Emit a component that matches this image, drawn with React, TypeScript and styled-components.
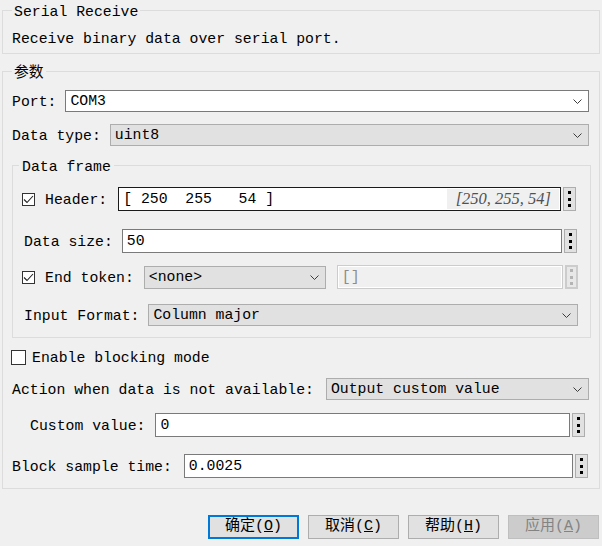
import React from 'react';
import styled, { createGlobalStyle } from 'styled-components';

const Global = createGlobalStyle`
  html, body { margin: 0; padding: 0; background: #f0f0f0; }
  body {
    width: 602px; height: 546px; overflow: hidden;
    font-family: "Liberation Mono", "Noto Sans CJK SC", monospace;
    font-size: 14.8px; color: #000;
  }
  * { box-sizing: border-box; }
`;

const Dialog = styled.div`
  display: flex;
  flex-direction: column;
  width: 602px;
  height: 546px;
  padding: 1px 2px 0 2px;
`;

const Group = styled.fieldset<{ $mt?: number; $mr?: number; $pt: number; $pb: number; $pr?: number }>`
  margin: ${p => p.$mt ?? 0}px ${p => p.$mr ?? 0}px 0 0;
  padding: ${p => p.$pt}px ${p => p.$pr ?? 10}px ${p => p.$pb}px 9px;
  border: 1px solid #dcdcdc;
  min-width: 0;
`;

const Legend = styled.legend<{ $inner?: boolean }>`
  padding: 2px ${p => (p.$inner ? 3 : 2)}px 0;
  margin-left: ${p => (p.$inner ? -3 : 0)}px;
  line-height: 18px;
  height: 18px;
  font-size: 14.8px;
`;

const Body = styled.div`
  display: flex;
  flex-direction: column;
`;

const Desc = styled.div`
  height: 18px;
  line-height: 18px;
  padding-top: 1px;
  white-space: pre;
`;

const Row = styled.div<{ $mt?: number; $h: number; $pr?: number; $pl?: number }>`
  display: flex;
  align-items: center;
  height: ${p => p.$h}px;
  margin-top: ${p => p.$mt ?? 0}px;
  padding-right: ${p => p.$pr ?? 0}px;
  padding-left: ${p => p.$pl ?? 0}px;
`;

const Label = styled.span<{ $gap?: number }>`
  flex: none;
  line-height: 18px;
  padding-top: 1px;
  white-space: pre;
  margin-right: ${p => p.$gap ?? 9}px;
`;

const Box = styled.span<{ $size: number; $ml?: number; $mr: number }>`
  flex: none;
  width: ${p => p.$size}px;
  height: ${p => p.$size}px;
  margin-left: ${p => p.$ml ?? 0}px;
  margin-right: ${p => p.$mr}px;
  border: 1px solid #333;
  background: #fff;
  display: flex;
  align-items: center;
  justify-content: center;
`;

const Combo = styled.div<{ $white?: boolean; $w?: number; $h?: number }>`
  flex: ${p => (p.$w ? `0 0 ${p.$w}px` : '1 1 0')};
  min-width: 0;
  height: ${p => p.$h ?? 22}px;
  display: flex;
  align-items: center;
  padding: 0 6px 0 4px;
  background: ${p => (p.$white ? '#ffffff' : '#e1e1e1')};
  border: 1px solid ${p => (p.$white ? '#7a7a7a' : '#adadad')};
`;

const Value = styled.span<{ $muted?: boolean }>`
  flex: 1;
  min-width: 0;
  overflow: hidden;
  white-space: pre;
  line-height: 18px;
  color: ${p => (p.$muted ? '#8c8c8c' : '#000')};
`;

const Edit = styled.div<{ $focus?: boolean; $disabled?: boolean; $h?: number; $ml?: number }>`
  flex: 1 1 0;
  min-width: 0;
  height: ${p => p.$h ?? 24}px;
  margin-left: ${p => p.$ml ?? 0}px;
  display: flex;
  align-items: center;
  padding-left: 4px;
  background: ${p => (p.$disabled ? '#f0f0f0' : '#ffffff')};
  border: 1px solid ${p => (p.$focus ? '#1a1a1a' : p.$disabled ? '#cccccc' : '#7a7a7a')};
  box-shadow: ${p => (p.$disabled ? 'inset 0 0 0 1px #ffffff' : 'none')};
`;

const Badge = styled.span`
  flex: none;
  height: 20px;
  margin-right: 1px;
  padding: 0 8px 0 9px;
  display: flex;
  align-items: center;
  background: #f0f0f0;
  color: #505050;
  font-family: "Liberation Serif", serif;
  font-style: italic;
  font-size: 16.5px;
  white-space: pre;
`;

const DotsButton = styled.div<{ $disabled?: boolean; $h?: number }>`
  flex: none;
  width: 13px;
  height: ${p => p.$h ?? 24}px;
  margin-left: 2px;
  display: flex;
  flex-direction: column;
  align-items: center;
  justify-content: center;
  gap: 3.5px;
  background: ${p => (p.$disabled ? '#e8e8e8' : '#e1e1e1')};
  border: ${p => (p.$disabled ? '2px solid #cccccc' : '1px solid #adadad')};
`;

const Dot = styled.span<{ $disabled?: boolean }>`
  width: 3px;
  height: 3px;
  background: ${p => (p.$disabled ? '#b4b4b4' : '#000')};
`;

const Buttons = styled.div`
  display: flex;
  justify-content: flex-end;
  gap: 9px;
  margin-top: 26px;
  padding-right: 1px;
`;

const Button = styled.div<{ $primary?: boolean; $disabled?: boolean }>`
  width: 91px;
  height: 24px;
  display: flex;
  align-items: center;
  justify-content: center;
  font-size: 15px;
  line-height: 18px;
  color: ${p => (p.$disabled ? '#838383' : '#000')};
  background: ${p => (p.$disabled ? '#cccccc' : '#e1e1e1')};
  border: ${p => (p.$primary ? '2px solid #0078d7' : p.$disabled ? '1px solid #bfbfbf' : '1px solid #adadad')};
  white-space: pre;
`;

const Chevron = () => (
  <svg width="9" height="5" viewBox="0 0 9 5" style={{ flex: 'none' }}>
    <polyline points="0.5,0.5 4.5,4.5 8.5,0.5" fill="none" stroke="#3c3c3c" strokeWidth="1" />
  </svg>
);

const Tick = () => (
  <svg width="11" height="9" viewBox="0 0 11 9">
    <polyline points="1,4.5 4,7.5 10,1" fill="none" stroke="#222" strokeWidth="1.1" />
  </svg>
);

const Dots: React.FC<{ disabled?: boolean; h?: number }> = ({ disabled, h }) => (
  <DotsButton $disabled={disabled} $h={h}>
    <Dot $disabled={disabled} />
    <Dot $disabled={disabled} />
    <Dot $disabled={disabled} />
  </DotsButton>
);

export default function App() {
  return (
    <>
      <Global />
      <Dialog>
        <Group $pt={10} $pb={6}>
          <Legend>Serial Receive</Legend>
          <Body>
            <Desc>Receive binary data over serial port.</Desc>
          </Body>
        </Group>

        <Group $mt={8} $pt={10} $pb={10}>
          <Legend>参数</Legend>
          <Body>
            <Row $h={22}>
              <Label>Port:</Label>
              <Combo $white>
                <Value>COM3</Value>
                <Chevron />
              </Combo>
            </Row>
            <Row $h={22} $mt={12}>
              <Label>Data type:</Label>
              <Combo>
                <Value>uint8</Value>
                <Chevron />
              </Combo>
            </Row>

            <Group $mt={10} $mr={-2} $pt={13} $pb={11} $pr={12}>
              <Legend $inner>Data frame</Legend>
              <Body>
                <Row $h={24} $pr={2}>
                  <Box $size={13} $mr={10}><Tick /></Box>
                  <Label $gap={11}>Header:</Label>
                  <Edit $focus>
                    <Value>[ 250  255   54 ]</Value>
                    <Badge>[250, 255, 54]</Badge>
                  </Edit>
                  <Dots />
                </Row>
                <Row $h={24} $mt={18} $pr={1} $pl={2}>
                  <Label>Data size:</Label>
                  <Edit>
                    <Value>50</Value>
                  </Edit>
                  <Dots />
                </Row>
                <Row $h={24} $mt={12}>
                  <Box $size={13} $mr={10}><Tick /></Box>
                  <Label $gap={10}>End token:</Label>
                  <Combo $w={182} $h={23}>
                    <Value>{'<none>'}</Value>
                    <Chevron />
                  </Combo>
                  <Edit $disabled $ml={11}>
                    <Value $muted>[]</Value>
                  </Edit>
                  <Dots disabled />
                </Row>
                <Row $h={22} $mt={15} $pl={2}>
                  <Label>Input Format:</Label>
                  <Combo>
                    <Value>Column major</Value>
                    <Chevron />
                  </Combo>
                </Row>
              </Body>
            </Group>

            <Row $h={18} $mt={10}>
              <Box $size={15} $ml={-1} $mr={6} />
              <Label>Enable blocking mode</Label>
            </Row>
            <Row $h={22} $mt={12}>
              <Label $gap={12}>Action when data is not available:</Label>
              <Combo>
                <Value>Output custom value</Value>
                <Chevron />
              </Combo>
            </Row>
            <Row $h={24} $mt={13} $pl={18} $pr={4}>
              <Label $gap={10}>Custom value:</Label>
              <Edit>
                <Value>0</Value>
              </Edit>
              <Dots />
            </Row>
            <Row $h={24} $mt={17} $pr={1}>
              <Label $gap={12}>Block sample time:</Label>
              <Edit>
                <Value>0.0025</Value>
              </Edit>
              <Dots />
            </Row>
          </Body>
        </Group>

        <Buttons>
          <Button $primary>确定(<u>O</u>)</Button>
          <Button>取消(<u>C</u>)</Button>
          <Button>帮助(<u>H</u>)</Button>
          <Button $disabled>应用(<u>A</u>)</Button>
        </Buttons>
      </Dialog>
    </>
  );
}
